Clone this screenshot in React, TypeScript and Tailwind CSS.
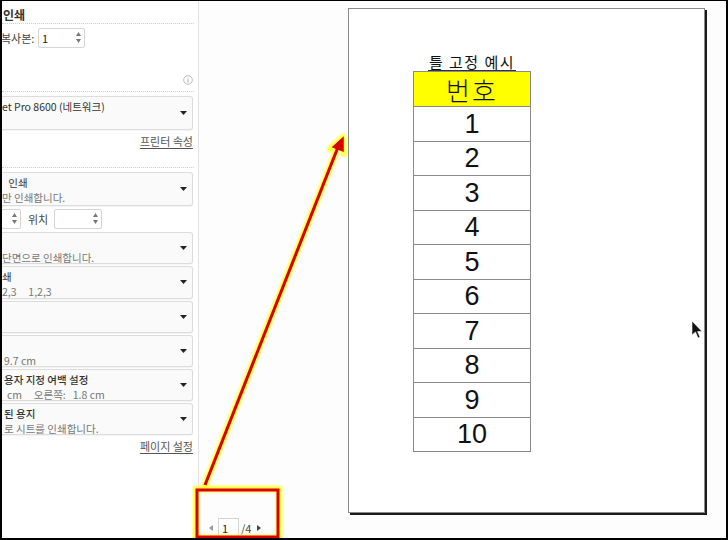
import React from "react";

const KR = { fontFamily: '"Noto Sans CJK KR", "Noto Sans", sans-serif' };

function Spin({ w, value, left = 0 }: { w: number; value?: string; left?: number }) {
  return (
    <div
      className="relative h-[20px] border border-[#d4d4d4] bg-white rounded-[2px] shrink-0"
      style={{ width: w, marginLeft: left }}
    >
      {value && <span className="absolute left-[3px] top-[1px] text-[11px] text-[#222]">{value}</span>}
      <div className="absolute right-[3px] top-[3px] flex flex-col items-center gap-[3px]">
        <svg width="5" height="4" viewBox="0 0 5 4"><path d="M0 4 L2.5 0 L5 4Z" fill="#777" /></svg>
        <svg width="5" height="4" viewBox="0 0 5 4"><path d="M0 0 L2.5 4 L5 0Z" fill="#777" /></svg>
      </div>
    </div>
  );
}

function Drop({ l1, l2, h = 32, mt = 2, x1 = 2, x2 = 2, bold = false }: { l1?: string; l2?: string; h?: number; mt?: number; x1?: number; x2?: number; bold?: boolean }) {
  return (
    <div
      className="relative w-[191px] border border-l-0 border-[#dcdcdc] rounded-r-[3px] bg-[#fafafa] shadow-[0_1px_1px_rgba(0,0,0,0.05)]"
      style={{ height: h, marginTop: mt }}
    >
      {l1 && (
        <div className={`absolute top-[2px] text-[10.5px] leading-[15px] text-[#333] whitespace-pre ${bold ? "font-medium" : ""}`} style={{ left: x1 }}>
          {l1}
        </div>
      )}
      {l2 && (
        <div className="absolute top-[17px] text-[10.5px] leading-[15px] text-[#777] whitespace-pre" style={{ left: x2 }}>
          {l2}
        </div>
      )}
      <svg className="absolute right-[5px]" style={{ top: h / 2 - 3 }} width="7" height="4" viewBox="0 0 7 4">
        <path d="M0 0 L7 0 L3.5 4Z" fill="#222" />
      </svg>
    </div>
  );
}

function Dotted({ mt }: { mt: number }) {
  return <div className="w-[192px] border-t border-dotted border-[#cfcfcf]" style={{ marginTop: mt }} />;
}

export default function App() {
  const rows = ["1", "2", "3", "4", "5", "6", "7", "8", "9", "10"];
  return (
    <div className="relative w-[728px] h-[540px] overflow-hidden bg-white border-t border-l-2 border-r-2 border-b-2 border-black" style={KR}>
      <div className="flex h-full">
        {/* left settings panel */}
        <div className="w-[197px] h-full border-r border-[#e2e2e2] bg-white flex flex-col shrink-0">
          <div className="mt-[5px] ml-[1px] h-[17px] text-[12px] leading-[17px] font-bold text-[#333]">인쇄</div>
          <Dotted mt={0} />
          <div className="mt-[4px] flex items-center h-[20px]">
            <span className="text-[11px] text-[#444] w-[37px] -ml-[1px]">복사본:</span>
            <Spin w={47} value="1" />
          </div>
          <div className="mt-[27px] h-[10px] flex justify-end pr-[5px]">
            <svg width="10" height="10" viewBox="0 0 10 10">
              <circle cx="5" cy="5" r="4.3" fill="none" stroke="#aaa" strokeWidth="0.8" />
              <rect x="4.5" y="4.2" width="1" height="3.3" fill="#aaa" />
              <rect x="4.5" y="2.5" width="1" height="1" fill="#aaa" />
            </svg>
          </div>
          <Dotted mt={6} />
          <Drop h={34} mt={4} l1="et Pro 8600 (네트워크)" x1={0} />
          <div className="mt-[3px] w-[191px] flex justify-end">
            <span className="text-[11px] text-[#555] underline underline-offset-2">프린터 속성</span>
          </div>
          <Dotted mt={17} />
          <Drop h={34} mt={4} l1=" 인쇄" l2="만 인쇄합니다." x1={4} x2={0} />
          <div className="mt-[3px] flex items-center h-[21px]">
            <Spin w={20} left={-1} />
            <span className="ml-[7px] text-[11px] text-[#444] w-[26px]">위치</span>
            <Spin w={48} />
          </div>
          <Drop h={32} mt={2} l2="단면으로 인쇄합니다." x2={0} />
          <Drop h={33} mt={2} l1="쇄" l2={"2,3     1,2,3"} x1={0} x2={0} />
          <Drop h={32} mt={2} />
          <Drop h={32} mt={2} l2="9.7 cm" x2={2} />
          <Drop h={32} mt={2} l1="용자 지정 여백 설정" l2={"cm     오른쪽:   1.8 cm"} x1={2} x2={5} bold />
          <Drop h={32} mt={2} l1="된 용지" l2="로 시트를 인쇄합니다." x1={2} x2={2} bold />
          <div className="mt-[3px] w-[191px] flex justify-end">
            <span className="text-[11px] text-[#555] underline underline-offset-2">페이지 설정</span>
          </div>
        </div>

        {/* preview area */}
        <div className="flex-1 h-full bg-[#fdfdfd] flex flex-col">
          <div className="ml-[149px] mt-[7px] w-[357px] h-[505px] bg-white border border-[#8a8a8a] shadow-[2px_2px_0_#1a1a1a] flex flex-col">
            <div className="ml-[64px] mt-[42px] w-[118px] flex flex-col" style={{ fontFamily: '"Noto Sans CJK KR", "Liberation Sans", sans-serif' }}>
              <div className="h-[20px] flex items-end justify-center">
                <span className="text-[15px] leading-[17px] text-[#111] border-b border-[#333] tracking-[1.5px] px-[1px]">틀 고정 예시</span>
              </div>
              <div className="border border-[#8a8a8a]">
                <div className="h-[34px] bg-[#ffff00] flex items-center justify-center text-[26px] font-light text-[#111] tracking-[2px]">번호</div>
                {rows.map((r) => (
                  <div
                    key={r}
                    className="h-[34.5px] border-t border-[#8a8a8a] flex items-center justify-center text-[27px] text-[#111]"
                    style={{ fontFamily: '"Liberation Sans", Arial, sans-serif' }}
                  >
                    {r}
                  </div>
                ))}
              </div>
            </div>
          </div>
          <div className="mt-[5px] ml-[10px] flex items-center h-[20px] text-[11px] text-[#444]">
            <svg width="4" height="6" viewBox="0 0 4 6"><path d="M4 0 L0 3 L4 6Z" fill="#999" /></svg>
            <div className="ml-[5px] w-[21px] h-[20px] border border-[#d4d4d4] bg-white pl-[3px] leading-[18px] text-[#222]">1</div>
            <span className="ml-[2px]">/4</span>
            <svg className="ml-[6px]" width="4" height="6" viewBox="0 0 4 6"><path d="M0 0 L4 3 L0 6Z" fill="#444" /></svg>
          </div>
        </div>
      </div>

      {/* annotation overlay */}
      <svg className="absolute left-0 top-0 pointer-events-none" width="728" height="540" viewBox="0 0 728 540">
        <defs>
          <filter id="glow" x="-20%" y="-20%" width="140%" height="140%">
            <feGaussianBlur stdDeviation="1" />
          </filter>
        </defs>
        <g filter="url(#glow)" stroke="#ffff40" fill="none" strokeLinejoin="round" strokeLinecap="round">
          <line x1="203" y1="484" x2="337" y2="143" strokeWidth="6.5" />
          <path d="M328 148 L341 136 L342 153" strokeWidth="6" />
          <rect x="194" y="488" width="83" height="49" strokeWidth="6.5" />
        </g>
        <g stroke="#d80000" fill="none" strokeLinejoin="miter">
          <line x1="203" y1="484" x2="338" y2="141" strokeWidth="3" />
          <path d="M331 146 L341 137 L341 150Z" fill="#d80000" strokeWidth="1.5" />
          <rect x="195" y="489" width="81" height="47" strokeWidth="3" />
        </g>
        {/* mouse cursor */}
        <path d="M690 320 L690 334 L693.5 331 L696 337 L698 336 L695.5 330.5 L700 330.5 Z" fill="#111" stroke="#fff" strokeWidth="0.6" />
      </svg>
    </div>
  );
}
